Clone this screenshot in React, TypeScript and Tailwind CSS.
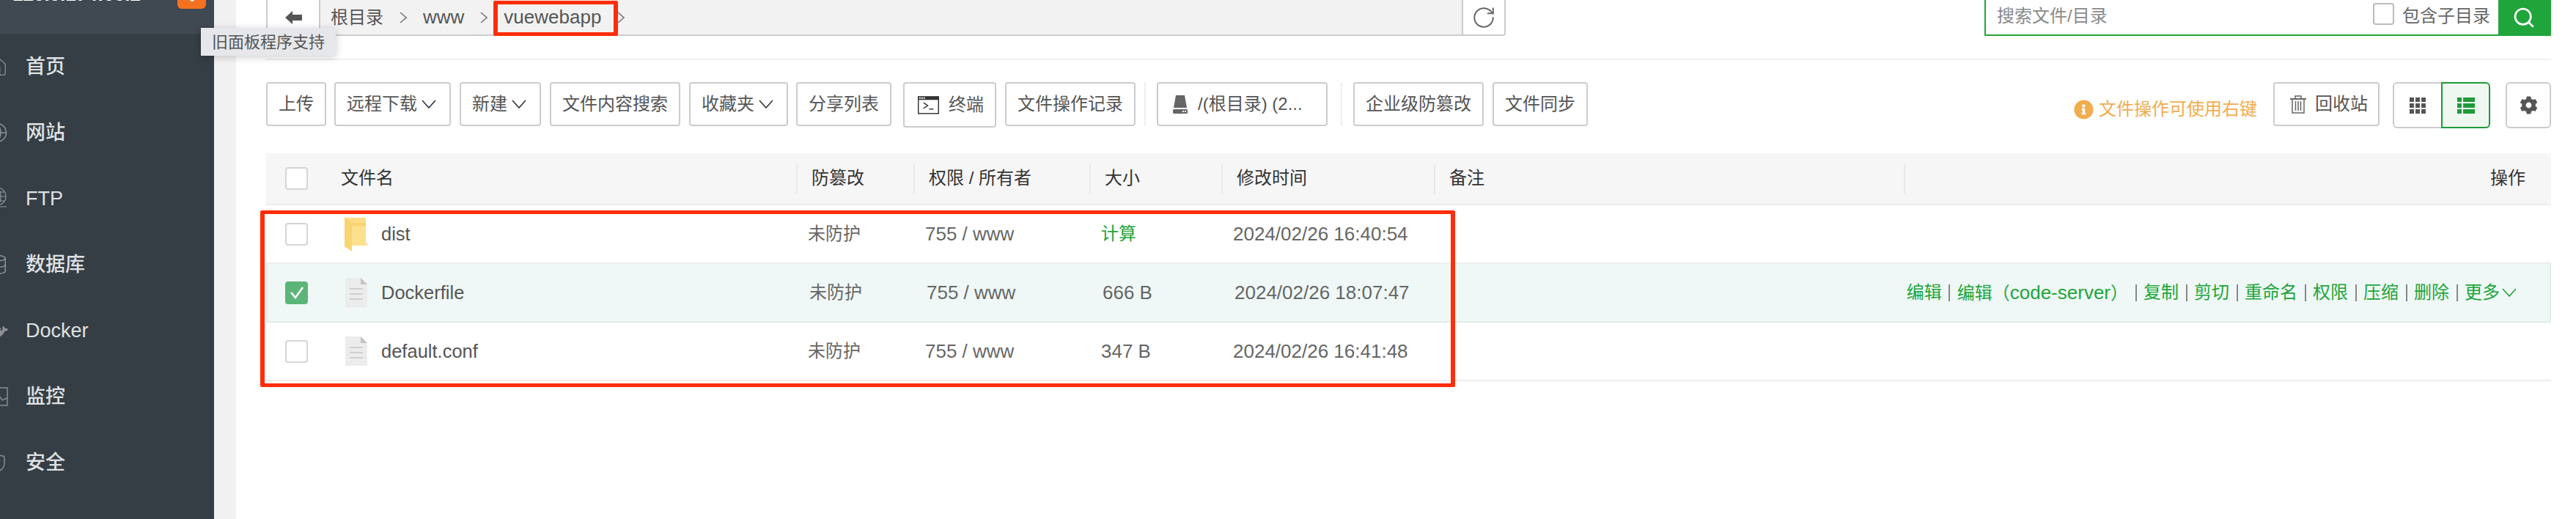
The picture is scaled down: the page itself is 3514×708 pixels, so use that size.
import { ReactNode } from 'react';
import { Database, Globe, House, RotateCw, Search, ShieldCheck } from 'lucide-react';
import { FaCog, FaDocker, FaInfoCircle } from 'react-icons/fa';

const navItems: { label: string; icon: ReactNode }[] = [
  { label: '首页', icon: <House size={30} strokeWidth={1} /> },
  { label: '网站', icon: <Globe size={30} strokeWidth={1.2} /> },
  { label: 'FTP', icon: <FtpIcon /> },
  { label: '数据库', icon: <Database size={30} strokeWidth={1.2} /> },
  { label: 'Docker', icon: <FaDocker size={30} /> },
  { label: '监控', icon: <MonitorIcon /> },
  { label: '安全', icon: <ShieldCheck size={30} strokeWidth={1.1} /> },
];

const columns = 'grid-cols-[723px_160px_240px_180px_290px_641px_1fr]';

const files = [
  { name: 'dist', kind: 'folder', size: '计算', time: '2024/02/26 16:40:54' },
  { name: 'Dockerfile', kind: 'file', size: '666 B', time: '2024/02/26 18:07:47', selected: true },
  { name: 'default.conf', kind: 'file', size: '347 B', time: '2024/02/26 16:41:48' },
];

const rowActions = ['复制', '剪切', '重命名', '权限', '压缩', '删除'];

function FtpIcon() {
  return (
    <svg width="30" height="32" viewBox="0 0 30 32" fill="none" stroke="currentColor" strokeWidth="1.2">
      <circle cx="15" cy="13" r="12" />
      <ellipse cx="15" cy="13" rx="5" ry="12" />
      <path d="M3 13h24M5 7h20M5 19h20M2 27h26M15 25v2" />
    </svg>
  );
}

function MonitorIcon() {
  return (
    <svg width="30" height="26" viewBox="0 0 30 26" fill="none" stroke="currentColor" strokeWidth="1.4">
      <rect x="1" y="1" width="28" height="24" />
      <path d="M1 7h16M1 12h10M1 21l8-5 4 3 5-7 4 6 7-3" />
    </svg>
  );
}

function BackArrow() {
  return (
    <svg width="23" height="18" viewBox="0 0 23 18" fill="#555">
      <path d="M0 9L10 0v5h13v8H10v5z" />
    </svg>
  );
}

function DownChevron({ className = '' }: { className?: string }) {
  return (
    <svg width="20" height="12" viewBox="0 0 20 12" fill="none" stroke="currentColor" strokeWidth="1.6" className={className}>
      <path d="M1 1l9 10 9-10" />
    </svg>
  );
}

function CrumbChevron() {
  return (
    <svg width="10" height="16" viewBox="0 0 10 16" fill="none" stroke="#777" strokeWidth="1.6">
      <path d="M1 1l8 7-8 7" />
    </svg>
  );
}

function TerminalIcon() {
  return (
    <svg width="30" height="25" viewBox="0 0 30 25">
      <rect x="0.75" y="0.75" width="28.5" height="23.5" fill="#fff" stroke="#333" strokeWidth="1.5" />
      <rect width="30" height="5" fill="#333" />
      <path d="M2 1.5h2v2H2zM5 1.5h2v2H5zM8 1.5h2v2H8z" fill="#fff" />
      <path d="M8 9l6 4-6 4" fill="none" stroke="#333" strokeWidth="1.5" />
      <path d="M16 18h6" stroke="#333" strokeWidth="1.5" />
    </svg>
  );
}

function DiskIcon() {
  return (
    <svg width="20" height="25" viewBox="0 0 20 25">
      <path d="M4 0h12l3 17H1z" fill="#666" />
      <rect y="19" width="20" height="6" rx="1.5" fill="#666" />
      <path d="M13 21h2v2h-2zM16 21h2v2h-2z" fill="#fff" />
    </svg>
  );
}

function TrashIcon() {
  return (
    <svg width="22" height="26" viewBox="0 0 22 26" fill="none" stroke="#666" strokeWidth="1.5">
      <path d="M0 6h22" strokeWidth="2" />
      <path d="M7 6V2h8v4" />
      <path d="M3 6v19h16V6M7.5 9v13M11 9v13M14.5 9v13" />
    </svg>
  );
}

function GridIcon() {
  return (
    <svg width="22" height="22" viewBox="0 0 22 22" fill="#555">
      <path d="M0 0h6v6H0zM8 0h6v6H8zM16 0h6v6h-6zM0 8h6v6H0zM8 8h6v6H8zM16 8h6v6h-6zM0 16h6v6H0zM8 16h6v6H8zM16 16h6v6h-6z" />
    </svg>
  );
}

function ListIcon() {
  return (
    <svg width="24" height="22" viewBox="0 0 24 22" fill="#1f9a38">
      <path d="M0 0h6v6H0zM8 0h16v6H8zM0 8h6v6H0zM8 8h16v6H8zM0 16h6v6H0zM8 16h16v6H8z" />
    </svg>
  );
}

function FolderIcon() {
  return (
    <svg width="32" height="47" viewBox="0 0 32 47">
      <path d="M0 1h29v38H0z" fill="#fbdc85" />
      <path d="M10 8h19v31h3l-1 -4H10z" fill="#f5c95f" opacity="0.5" />
      <path d="M0 0l10 8v39L0 40z" fill="#f7d672" />
      <path d="M10 12h19v27H10z" fill="#fde08c" />
    </svg>
  );
}

function FileIcon() {
  return (
    <svg width="30" height="40" viewBox="0 0 30 40">
      <path d="M0 0h21l9 9v31H0z" fill="#ececec" />
      <path d="M21 0l9 9h-9z" fill="#c4c4c4" />
      <path d="M6 14h18v2H6zM6 21h18v2H6zM6 28h18v2H6z" fill="#cfcfcf" />
    </svg>
  );
}

function Checkbox({ checked = false }: { checked?: boolean }) {
  if (checked) {
    return (
      <span className="flex h-[31px] w-[31px] shrink-0 items-center justify-center rounded-[4px] bg-[#5cb578]">
        <svg width="20" height="18" viewBox="0 0 20 18" fill="none" stroke="#fff" strokeWidth="2.6">
          <path d="M2 9l6 7L18 2" />
        </svg>
      </span>
    );
  }
  return <span className="block h-[31px] w-[31px] shrink-0 rounded-[4px] border-2 border-[#d5d5d5] bg-white" />;
}

function ToolButton({ children, menu = false, className = '' }: { children: ReactNode; menu?: boolean; className?: string }) {
  return (
    <div className={`flex h-[60px] items-center whitespace-nowrap rounded-[4px] border-2 border-[#ccc] bg-white px-[15px] text-[#555] ${className}`}>
      {children}
      {menu && <DownChevron className="ml-[6px] mr-[3px] text-[#333]" />}
    </div>
  );
}

function Divider({ className = '' }: { className?: string }) {
  return <span className={`h-[60px] w-[2px] bg-[#eee] ${className}`} />;
}

function ActionSep() {
  return <span className="mx-[9.5px] h-[23px] w-[2px] bg-[#888]" />;
}

function RowActions() {
  return (
    <div className="flex items-center justify-end whitespace-nowrap pr-[45px] text-[#20a53a]">
      <span>编辑</span>
      <ActionSep />
      <span>编辑（<span className="text-[26px]">code-server</span>）</span>
      <ActionSep />
      {rowActions.map((action) => (
        <span key={action} className="flex items-center">
          <span>{action}</span>
          <ActionSep />
        </span>
      ))}
      <span>更多</span>
      <DownChevron className="ml-[3px]" />
    </div>
  );
}

export default function App() {
  return (
    <div className="relative flex h-[708px] w-[3514px] overflow-hidden bg-white font-['Liberation_Sans','Noto_Sans_CJK_SC',sans-serif] text-[24px]">
      <aside className="h-full w-[292px] shrink-0 bg-[#363e45] text-[#dfe1e3]">
        <div className="relative h-[46px] overflow-hidden bg-[#404852]">
          <span className="absolute -top-[27px] left-[17px] text-[26px] font-bold text-white">120.0.174:00.2</span>
          <span className="absolute -top-[10px] left-[242px] flex h-[22px] w-[39px] items-end justify-center rounded-[6px] bg-[#f5701f] pb-[10px]">
            <span className="h-[6px] w-[6px] rounded-full bg-white" />
          </span>
        </div>
        <nav>
          {navItems.map((item) => (
            <div key={item.label} className="flex h-[90px] items-center">
              <span className="-ml-[19px] flex w-[30px] shrink-0 justify-center text-[#8d9296]">{item.icon}</span>
              <span className="ml-[24px] text-[27px] font-medium">{item.label}</span>
            </div>
          ))}
        </nav>
      </aside>
      <div className="w-[30px] shrink-0 bg-[#f1f1f1]" />

      <main className="min-w-0 flex-1 pl-[41px] pr-[34px]">
        <div className="flex h-[49px] items-stretch">
          <div className="flex w-[1631px] items-stretch border-b-2 border-[#ccc] bg-[#f2f2f2] text-[#555]">
            <div className="flex w-[74px] items-center justify-center border-x-2 border-[#ccc] bg-white">
              <BackArrow />
            </div>
            <div className="flex items-center gap-[22px] pl-[14px]">
              <span>根目录</span>
              <CrumbChevron />
              <span className="text-[26px]">www</span>
              <CrumbChevron />
              <span className="text-[26px]">vuewebapp</span>
              <CrumbChevron />
            </div>
          </div>
          <div className="flex w-[60px] items-center justify-center rounded-br-[4px] border-x-2 border-b-2 border-[#ccc] bg-white text-[#666]">
            <RotateCw size={34} strokeWidth={1.4} />
          </div>
          <div className="ml-auto flex w-[773px] items-stretch border-x-2 border-b-2 border-[#20a53a]">
            <span className="flex-1 pl-[15px] pt-[4px] text-[#8a8a8a]">搜索文件/目录</span>
            <div className="flex items-start gap-[11px] pt-[4px] text-[#666]">
              <span className="block h-[30px] w-[29px] rounded-[4px] border-2 border-[#bbb] bg-white" />
              <span>包含子目录</span>
            </div>
            <div className="ml-[11px] flex w-[70px] items-center justify-center bg-[#20a53a] text-white">
              <Search size={32} strokeWidth={2} />
            </div>
          </div>
        </div>
        <div className="mt-[31px] h-[2px] bg-[#f0f0f0]" />

        <div className="mt-[30px] flex items-start">
          <div className="flex items-start gap-[12px]">
            <ToolButton>上传</ToolButton>
            <ToolButton menu className="-ml-[1px]">远程下载</ToolButton>
            <ToolButton menu>新建</ToolButton>
            <ToolButton>文件内容搜索</ToolButton>
            <ToolButton menu>收藏夹</ToolButton>
            <ToolButton className="-ml-[1px]">分享列表</ToolButton>
            <ToolButton className="ml-[4px] h-[62px] w-[127px] gap-[13px] !pl-[18px]">
              <TerminalIcon />
              终端
            </ToolButton>
            <ToolButton>文件操作记录</ToolButton>
            <Divider />
            <ToolButton className="ml-[3px] w-[233px] gap-[14px] !pl-[20px]">
              <DiskIcon />
              <span>/(根目录) (2...</span>
            </ToolButton>
            <Divider className="ml-[6px]" />
            <ToolButton className="ml-[3px]">企业级防篡改</ToolButton>
            <ToolButton>文件同步</ToolButton>
          </div>
          <div className="ml-auto flex items-start">
            <div className="mt-[19px] flex items-center gap-[7px] text-[#f0ad4e]">
              <FaInfoCircle size={27} />
              文件操作可使用右键
            </div>
            <ToolButton className="ml-[22px] w-[145px] gap-[12px] !px-0 !pl-[21px]">
              <TrashIcon />
              回收站
            </ToolButton>
            <div className="ml-[18px] flex h-[63px] w-[133px]">
              <div className="flex w-[66px] items-center justify-center rounded-l-[6px] border-2 border-r-0 border-[#ccc]">
                <GridIcon />
              </div>
              <div className="flex flex-1 items-center justify-center rounded-r-[6px] border-2 border-[#1f9a38] bg-[#eef8f0]">
                <ListIcon />
              </div>
            </div>
            <div className="ml-[21px] flex h-[63px] w-[62px] items-center justify-center rounded-[6px] border-2 border-[#ccc] text-[#555]">
              <FaCog size={25} />
            </div>
          </div>
        </div>

        <div className={`mt-[34px] grid h-[71px] ${columns} items-center border-b-2 border-[#eee] bg-[#f6f6f6] text-[#333]`}>
          <div className="flex items-center pl-[26px]">
            <Checkbox />
            <span className="mb-[2px] ml-[45px]">文件名</span>
          </div>
          {['防篡改', '权限 / 所有者', '大小', '修改时间', '备注'].map((title) => (
            <div key={title} className="flex h-[40px] items-center border-l-2 border-[#e8e8e8] pb-[2px] pl-[19px]">
              {title}
            </div>
          ))}
          <div className="flex h-[40px] items-center justify-end border-l-2 border-[#e8e8e8] pb-[2px] pr-[35px]">操作</div>
        </div>

        {files.map((file) => (
          <div
            key={file.name}
            className={`grid h-[80px] ${columns} items-center border-b-2 ${
              file.selected ? 'border-x-2 border-[#dfecea] bg-[#eff8f6]' : 'border-[#eee]'
            } text-[#666]`}
          >
            <div className={`flex items-center ${file.selected ? 'pl-[24px]' : 'pl-[26px]'}`}>
              <Checkbox checked={file.selected} />
              <span className="ml-[50px] flex w-[32px] justify-center">
                {file.kind === 'folder' ? <FolderIcon /> : <FileIcon />}
              </span>
              <span className="ml-[18px] text-[25.5px] text-[#555]">{file.name}</span>
            </div>
            <div className="pl-[16px]">未防护</div>
            <div className="pl-[16px] text-[26px]">755 / www</div>
            <div className={`pl-[16px] ${file.kind === 'folder' ? 'text-[#20a53a]' : 'text-[26px]'}`}>{file.size}</div>
            <div className="whitespace-nowrap pl-[16px] text-[26px]">{file.time}</div>
            <div />
            {file.selected ? <RowActions /> : <div />}
          </div>
        ))}
      </main>

      <div className="absolute left-[274px] top-[38px] flex h-[38px] w-[184px] items-center justify-center bg-[#e6e7ea] text-[22px] text-[#555] shadow-[0_2px_10px_rgba(0,0,0,0.2)]">
        旧面板程序支持
      </div>
      <div className="absolute left-[673px] top-[1px] h-[48px] w-[170px] rounded-[2px] border-x-[6px] border-y-[5px] border-[#ff2d0a]" />
      <div className="absolute left-[355px] top-[287px] h-[241px] w-[1630px] rounded-[2px] border-x-[6px] border-y-[5px] border-[#ff2d0a]" />
    </div>
  );
}
